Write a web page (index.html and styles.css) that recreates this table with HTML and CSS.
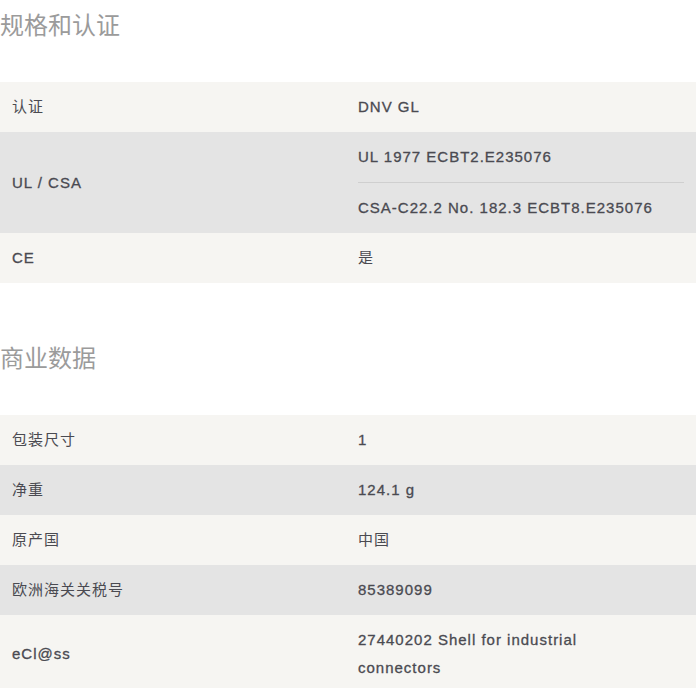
FILE: index.html
```html
<!DOCTYPE html>
<html lang="zh">
<head>
    <meta charset="UTF-8">
    <meta name="viewport" content="width=device-width, initial-scale=1.0">
    <title>规格和认证</title>
    <link rel="stylesheet" href="styles.css">
</head>
<body>
    <section class="spec-section">
        <h2 class="spec-heading">规格和认证</h2>
        <div class="spec-table">
            <div class="spec-row">
                <div class="spec-label">认证</div>
                <div class="spec-value">DNV GL</div>
            </div>
            <div class="spec-row">
                <div class="spec-label latin">UL / CSA</div>
                <div class="spec-value spec-multi">
                    <div class="spec-item">UL 1977 ECBT2.E235076</div>
                    <div class="spec-item">CSA-C22.2 No. 182.3 ECBT8.E235076</div>
                </div>
            </div>
            <div class="spec-row">
                <div class="spec-label latin">CE</div>
                <div class="spec-value cjk">是</div>
            </div>
        </div>
    </section>

    <section class="spec-section">
        <h2 class="spec-heading">商业数据</h2>
        <div class="spec-table">
            <div class="spec-row">
                <div class="spec-label">包装尺寸</div>
                <div class="spec-value">1</div>
            </div>
            <div class="spec-row">
                <div class="spec-label">净重</div>
                <div class="spec-value">124.1 g</div>
            </div>
            <div class="spec-row">
                <div class="spec-label">原产国</div>
                <div class="spec-value cjk">中国</div>
            </div>
            <div class="spec-row">
                <div class="spec-label">欧洲海关关税号</div>
                <div class="spec-value">85389099</div>
            </div>
            <div class="spec-row">
                <div class="spec-label latin">eCl@ss</div>
                <div class="spec-value spec-wrap">27440202 Shell for industrial connectors</div>
            </div>
        </div>
    </section>
</body>
</html>
```

FILE: styles.css
```css
body, html {
    margin: 0;
    background-color: #ffffff;
    font-family: "Liberation Sans", "Noto Sans CJK SC", sans-serif;
    color: #4a4a51;
}
.spec-section {
    margin-bottom: 60px;
}
.spec-heading {
    margin: 10px 0 40px 0;
    font-size: 24px;
    line-height: 32px;
    font-weight: normal;
    color: #9b9b9b;
}
.spec-table {
    display: flex;
    flex-direction: column;
}
.spec-row {
    display: grid;
    grid-template-columns: 346px 1fr;
    align-items: center;
    font-size: 15px;
    line-height: 28px;
    letter-spacing: 1px;
}
.spec-row:nth-child(odd) {
    background-color: #f6f5f2;
}
.spec-row:nth-child(even) {
    background-color: #e4e4e4;
}
.spec-label {
    padding: 11px 12px;
}
/* latin text is a touch heavier than the chinese labels */
.spec-label.latin,
.spec-value {
    -webkit-text-stroke: 0.3px currentColor;
}
.spec-value.cjk {
    -webkit-text-stroke: 0;
}
.spec-value {
    padding: 11px 12px;
}
.spec-multi {
    padding-top: 0;
    padding-bottom: 0;
}
.spec-item {
    padding: 11px 0;
}
.spec-item + .spec-item {
    border-top: 1px solid #cfcfcf;
}
.spec-wrap {
    max-width: 240px;
}
```
